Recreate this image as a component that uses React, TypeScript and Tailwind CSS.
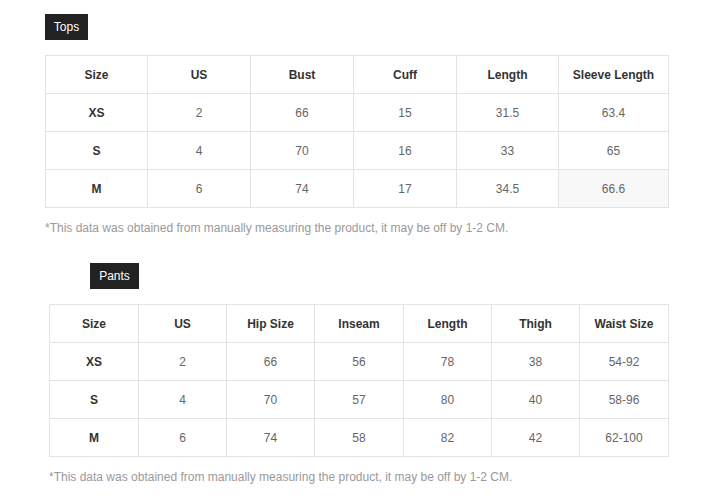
const tops = {
  head: ['Size', 'US', 'Bust', 'Cuff', 'Length', 'Sleeve Length'],
  widths: ['w-[102px]', 'w-[103px]', 'w-[103px]', 'w-[103px]', 'w-[102px]', 'w-[110px]'],
  rows: [
    ['XS', '2', '66', '15', '31.5', '63.4'],
    ['S', '4', '70', '16', '33', '65'],
    ['M', '6', '74', '17', '34.5', '66.6'],
  ],
}

const pants = {
  head: ['Size', 'US', 'Hip Size', 'Inseam', 'Length', 'Thigh', 'Waist Size'],
  widths: ['w-[89px]', 'w-[88px]', 'w-[88px]', 'w-[89px]', 'w-[88px]', 'w-[88px]', 'w-[89px]'],
  rows: [
    ['XS', '2', '66', '56', '78', '38', '54-92'],
    ['S', '4', '70', '57', '80', '40', '58-96'],
    ['M', '6', '74', '58', '82', '42', '62-100'],
  ],
}

const note = '*This data was obtained from manually measuring the product, it may be off by 1-2 CM.'

function SizeTable({
  data,
  hoverLast,
}: {
  data: { head: string[]; widths: string[]; rows: string[][] }
  hoverLast?: boolean
}) {
  return (
    <table className="border-collapse text-[12px]">
      <thead>
        <tr>
          {data.head.map((h, i) => (
            <th
              key={h}
              className={`${data.widths[i]} h-[38px] border border-[#e3e3e3] p-0 text-center font-bold text-[#333]`}
            >
              {h}
            </th>
          ))}
        </tr>
      </thead>
      <tbody>
        {data.rows.map((r, ri) => (
          <tr key={r[0]}>
            {r.map((c, i) => (
              <td
                key={i}
                className={
                  'h-[38px] border border-[#e3e3e3] p-0 text-center ' +
                  (i === 0 ? 'font-bold text-[#333] ' : 'text-[#666] ') +
                  (hoverLast && ri === data.rows.length - 1 && i === r.length - 1 ? 'bg-[#f8f8f8]' : '')
                }
              >
                {c}
              </td>
            ))}
          </tr>
        ))}
      </tbody>
    </table>
  )
}

export default function App() {
  return (
    <div className="min-h-[501px] w-[715px] bg-white font-['Liberation_Sans',Arial,sans-serif]">
      <div className="pl-[45px] pt-[14px]">
        <div className="flex h-[26px] w-[43px] items-center justify-center bg-[#222] text-[12px] text-white">
          Tops
        </div>
        <div className="mt-[15px]">
          <SizeTable data={tops} hoverLast />
        </div>
        <p className="mt-[13px] text-[12px] leading-[14px] text-[#999]">{note}</p>
      </div>

      <div className="pl-[49px] pt-[28px]">
        <div className="ml-[41px] flex h-[26px] w-[49px] items-center justify-center bg-[#222] text-[12px] text-white">
          Pants
        </div>
        <div className="mt-[15px]">
          <SizeTable data={pants} />
        </div>
        <p className="mt-[13px] text-[12px] leading-[14px] text-[#999]">{note}</p>
      </div>
    </div>
  )
}
